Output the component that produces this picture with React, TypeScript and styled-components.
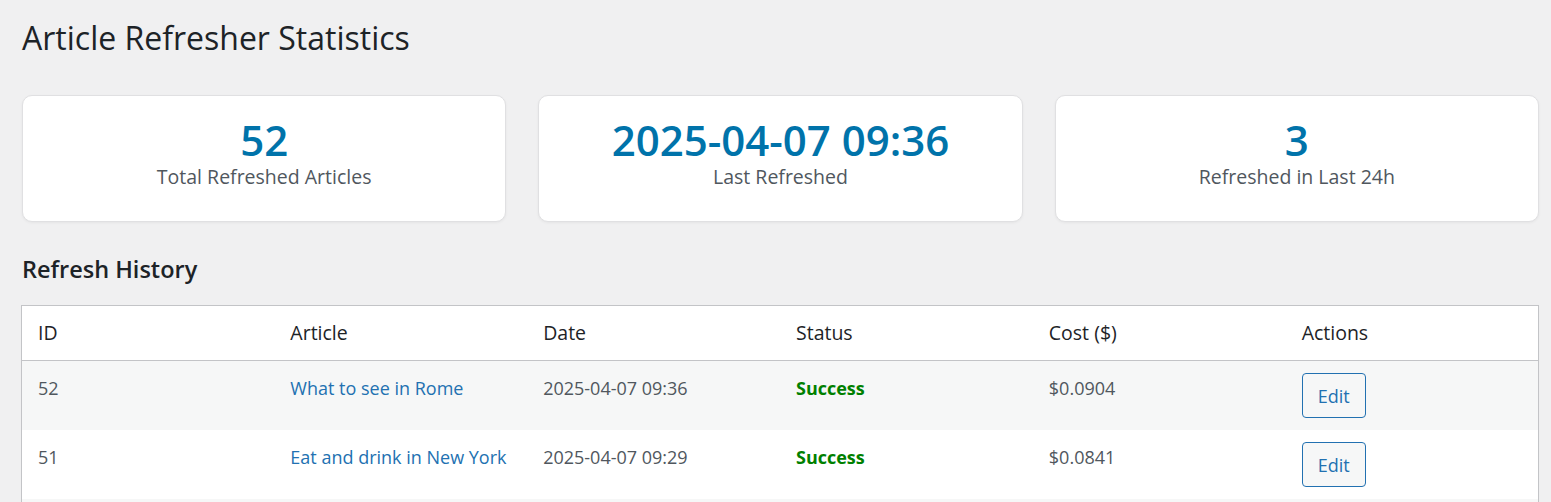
import React from 'react';
import styled, { createGlobalStyle } from 'styled-components';

const GlobalStyle = createGlobalStyle`
  html, body {
    margin: 0;
    padding: 0;
    background: #f0f0f1;
    overflow: hidden;
  }
  body {
    font-family: "Open Sans", "Noto Sans", "Liberation Sans", sans-serif;
    color: #3c434a;
  }
`;

const Wrap = styled.div`
  padding: 0 12px 0 22px;
`;

const PageTitle = styled.h1`
  margin: 18px 0 0;
  font-size: 32px;
  line-height: 40px;
  font-weight: 400;
  color: #1d2327;
`;

const StatsGrid = styled.div`
  display: grid;
  grid-template-columns: repeat(3, 1fr);
  gap: 32px;
  margin-top: 37px;
`;

const StatCard = styled.div`
  background: #fff;
  border: 1px solid #e0e0e2;
  border-radius: 10px;
  box-shadow: 0 1px 3px rgba(0, 0, 0, 0.05);
  padding: 20px 20px 30px;
  text-align: center;
  box-sizing: border-box;
  height: 127px;
`;

const StatValue = styled.div`
  font-size: 42px;
  line-height: 48px;
  font-weight: 600;
  color: #0073aa;
`;

const StatLabel = styled.div`
  font-size: 19.5px;
  line-height: 26px;
  color: #50575e;
`;

const SectionTitle = styled.h2`
  margin: 32px 0 21px;
  font-size: 23.5px;
  line-height: 30px;
  font-weight: 600;
  color: #1d2327;
`;

const Table = styled.table`
  width: calc(100% + 1px);
  margin-left: -1px;
  border-collapse: collapse;
  table-layout: fixed;
  background: #fff;
  border: 1px solid #c3c4c7;
  box-shadow: 0 1px 1px rgba(0, 0, 0, 0.04);
`;

const HeadCell = styled.th`
  text-align: left;
  font-weight: 400;
  font-size: 19.5px;
  line-height: 30px;
  color: #1d2327;
  padding: 12px 16px;
  border-bottom: 1px solid #c3c4c7;
`;

const Row = styled.tr<{ $striped: boolean }>`
  background: ${(p) => (p.$striped ? '#f6f7f7' : '#fff')};
`;

const Cell = styled.td`
  vertical-align: top;
  font-size: 18px;
  line-height: 31px;
  color: #50575e;
  padding: 12px 16px;
`;

const ArticleLink = styled.a`
  color: #2271b1;
  text-decoration: none;
`;

const Status = styled.span<{ $ok: boolean }>`
  font-weight: 700;
  color: ${(p) => (p.$ok ? '#008000' : '#d63638')};
`;

const EditButton = styled.button`
  font-family: inherit;
  font-size: 18px;
  height: 45px;
  padding: 0 15px;
  vertical-align: top;
  background: #f6f7f7;
  color: #2271b1;
  border: 1px solid #2271b1;
  border-radius: 4px;
  cursor: pointer;
`;

const stats = [
  { value: '52', label: 'Total Refreshed Articles' },
  { value: '2025-04-07 09:36', label: 'Last Refreshed' },
  { value: '3', label: 'Refreshed in Last 24h' },
];

const history = [
  { id: 52, title: 'What to see in Rome', date: '2025-04-07 09:36', ok: true, cost: '$0.0904' },
  { id: 51, title: 'Eat and drink in New York', date: '2025-04-07 09:29', ok: true, cost: '$0.0841' },
  { id: 50, title: 'A weekend in Lisbon', date: '2025-04-07 09:12', ok: true, cost: '$0.0877' },
];

const columns = ['ID', 'Article', 'Date', 'Status', 'Cost ($)', 'Actions'];

export default function App() {
  return (
    <>
      <GlobalStyle />
      <Wrap>
        <PageTitle>Article Refresher Statistics</PageTitle>

        <StatsGrid>
          {stats.map((s) => (
            <StatCard key={s.label}>
              <StatValue>{s.value}</StatValue>
              <StatLabel>{s.label}</StatLabel>
            </StatCard>
          ))}
        </StatsGrid>

        <SectionTitle>Refresh History</SectionTitle>

        <Table>
          <thead>
            <tr>
              {columns.map((c) => (
                <HeadCell key={c}>{c}</HeadCell>
              ))}
            </tr>
          </thead>
          <tbody>
            {history.map((h, i) => (
              <Row key={h.id} $striped={i % 2 === 0}>
                <Cell>{h.id}</Cell>
                <Cell>
                  <ArticleLink href="#">{h.title}</ArticleLink>
                </Cell>
                <Cell>{h.date}</Cell>
                <Cell>
                  <Status $ok={h.ok}>{h.ok ? 'Success' : 'Failed'}</Status>
                </Cell>
                <Cell>{h.cost}</Cell>
                <Cell>
                  <EditButton>Edit</EditButton>
                </Cell>
              </Row>
            ))}
          </tbody>
        </Table>
      </Wrap>
    </>
  );
}
